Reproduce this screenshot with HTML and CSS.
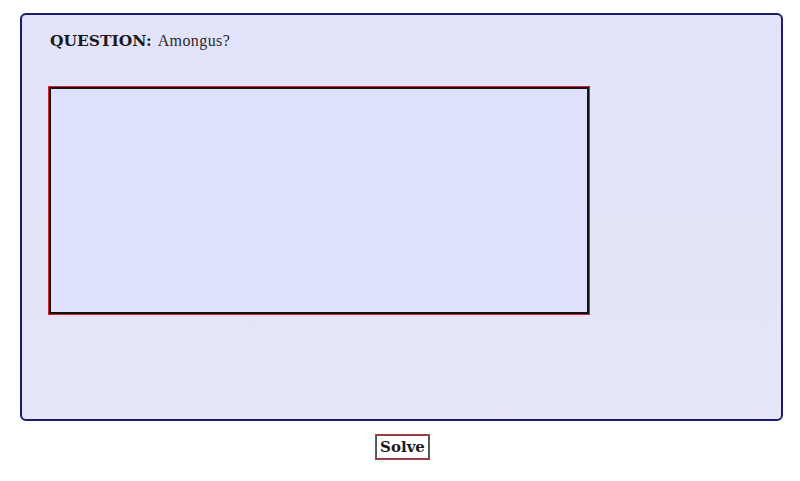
FILE: index.html
```html
<!DOCTYPE html>
<html>
<head>
<meta charset="utf-8">
<link rel="stylesheet" href="styles.css">
</head>
<body>
<div class="card">
  <p class="question"><b>QUESTION:</b> <span class="answer-text">Amongus?</span></p>
  <div class="canvas"></div>
</div>
<div class="actions">
  <button class="solve">Solve</button>
</div>
</body>
</html>
```
FILE: styles.css
```css
html, body {
  margin: 0;
  padding: 0;
  background: #ffffff;
}
body {
  font-family: "Liberation Serif", "DejaVu Serif", serif;
  color: #222;
}
.card {
  box-sizing: border-box;
  margin: 13px 17px 0 20px;
  height: 408px;
  border: 2px solid #1c1c6e;
  border-radius: 6px;
  background: linear-gradient(#e2e2fa, #e6e6f8);
  padding: 15px 0 0 27px;
}
.question {
  margin: 0 0 0 1px;
  font-size: 16px;
  line-height: 22px;
  color: #2a2a2a;
}
.question b {
  font-family: "DejaVu Serif", "Liberation Serif", serif;
  font-size: 15.5px;
  margin-right: 2px;
  color: #1a1a1a;
}
.answer-text {
  letter-spacing: 0.4px;
}
.canvas {
  box-sizing: border-box;
  margin-top: 35px;
  width: 540px;
  height: 227px;
  border: 2px solid #111;
  box-shadow: 0 0 0 1px #e0202a;
  background: #dde1fb;
}
.actions {
  display: flex;
  justify-content: center;
  padding: 13px 0 0 5px;
}
.solve {
  box-sizing: border-box;
  width: 55px;
  height: 26px;
  padding: 0;
  font-family: "DejaVu Serif", "Liberation Serif", serif;
  font-weight: bold;
  font-size: 15px;
  color: #1a1a1a;
  background: #ffffff;
  border: 1px solid #d42a30;
  box-shadow: inset 0 0 0 1px #555;
}
```
